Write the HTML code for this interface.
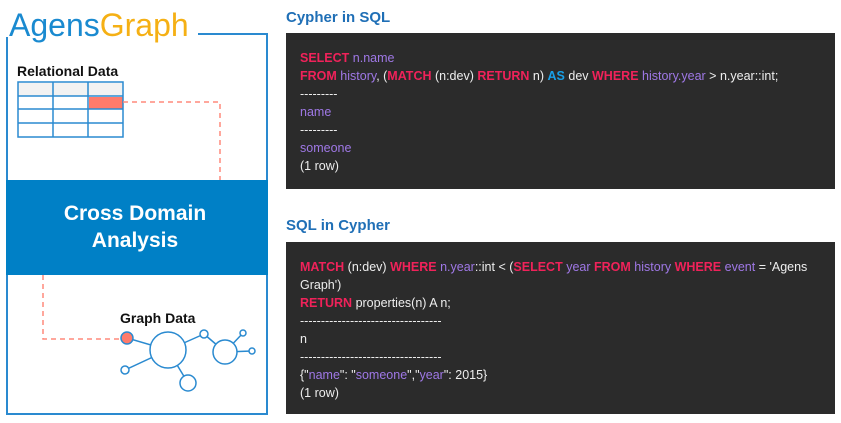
<!DOCTYPE html>
<html><head><meta charset="utf-8"><style>
body{margin:0;width:841px;height:423px;background:#fff;position:relative;overflow:hidden;font-family:"Liberation Sans",sans-serif}
.abs{position:absolute}
.logo{left:9px;top:6px;font-size:32px;letter-spacing:0px;line-height:38px}
.h{font-weight:bold;color:#1f6fb6;font-size:15px}
.panel{background:#2b2b2b;left:286px;width:549px;color:#eee;font-size:12.5px;line-height:18px;padding:0 14px;box-sizing:border-box}
.r{color:#f0225a;font-weight:bold}.p{color:#9f78e6}.b{color:#18a0e8;font-weight:bold}.g{color:#aaa}
</style></head><body>
<div class="abs logo"><span style="color:#1a8ad0">Agens</span><span style="color:#f5b014">Graph</span></div>
<svg class="abs" style="left:0;top:0" width="280" height="423">
<polyline points="7,37 7,414 267,414 267,34 198,34" fill="none" stroke="#2a8ad0" stroke-width="2"/>
<rect x="6" y="180" width="262" height="95" fill="#0080c6"/>
<rect x="18" y="83" width="105" height="13" fill="#f2f2f2"/>
<rect x="89" y="97" width="34" height="12" fill="#ff7b6b"/>
<g stroke="#2a8ad0" stroke-width="1.5" fill="none">
<rect x="18" y="82" width="105" height="55"/>
<line x1="18" y1="96" x2="123" y2="96"/><line x1="18" y1="109" x2="123" y2="109"/><line x1="18" y1="123" x2="123" y2="123"/>
<line x1="53" y1="82" x2="53" y2="137"/><line x1="88" y1="82" x2="88" y2="137"/>
</g>
<g stroke="#ff8a7c" stroke-width="1.5" fill="none" stroke-dasharray="5,4">
<polyline points="123,102 220,102 220,180"/>
<polyline points="43,275 43,339 121,339"/>
</g>
<g stroke="#2a8ad0" stroke-width="1.5" fill="#fff">
<line x1="127" y1="338" x2="168" y2="350"/><line x1="125" y1="370" x2="168" y2="350"/><line x1="188" y1="383" x2="168" y2="350"/>
<line x1="204" y1="334" x2="168" y2="350"/><line x1="204" y1="334" x2="225" y2="352"/><line x1="243" y1="333" x2="225" y2="352"/><line x1="252" y1="351" x2="225" y2="352"/>
<circle cx="168" cy="350" r="18"/><circle cx="125" cy="370" r="4"/><circle cx="188" cy="383" r="8"/>
<circle cx="204" cy="334" r="4"/><circle cx="225" cy="352" r="12"/><circle cx="243" cy="333" r="3"/><circle cx="252" cy="351" r="3"/>
<circle cx="127" cy="338" r="6" fill="#ff7b6b"/>
</g>
</svg>
<div class="abs" style="left:17px;top:63px;font-weight:bold;font-size:14px;color:#111">Relational Data</div>
<div class="abs" style="left:120px;top:310px;font-weight:bold;font-size:14px;color:#111">Graph Data</div>
<div class="abs" style="left:4px;top:200px;width:262px;text-align:center;color:#fff;font-weight:bold;font-size:21px;line-height:27px">Cross Domain<br>Analysis</div>
<div class="abs h" style="left:286px;top:9px">Cypher in SQL</div>
<div class="abs panel" style="top:33px;height:156px;padding-top:16px">
<span class="r">SELECT</span> <span class="p">n.name</span><br>
<span class="r">FROM</span> <span class="p">history</span>, (<span class="r">MATCH</span> (n:dev) <span class="r">RETURN</span> n) <span class="b">AS</span> dev <span class="r">WHERE</span> <span class="p">history.year</span> &gt; n.year::int;<br>
---------<br><span class="p">name</span><br>---------<br><span class="p">someone</span><br>(1 row)</div>
<div class="abs h" style="left:286px;top:217px">SQL in Cypher</div>
<div class="abs panel" style="top:242px;height:172px;padding-top:16px">
<span class="r">MATCH</span> (n:dev) <span class="r">WHERE</span> <span class="p">n.year</span>::int &lt; (<span class="r">SELECT</span> <span class="p">year</span> <span class="r">FROM</span> <span class="p">history</span> <span class="r">WHERE</span> <span class="p">event</span> = 'Agens<br>Graph')<br>
<span class="r">RETURN</span> properties(n) A n;<br>
----------------------------------<br>n<br>----------------------------------<br>
{"<span class="p">name</span>": "<span class="p">someone</span>","<span class="p">year</span>": 2015}<br>(1 row)</div>
</body></html>
